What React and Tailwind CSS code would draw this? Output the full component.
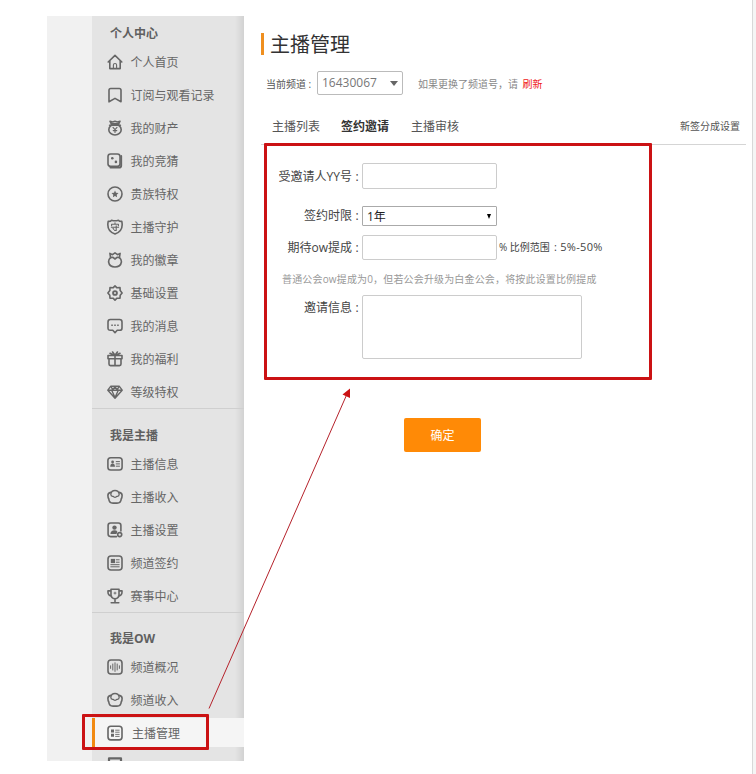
import React from "react";

const ICONS = {
  home: (
    <>
      <path d="M1.2 8 8 1.4 14.8 8M2.8 6.6v8h10.4v-8" />
      <path d="M6.4 14.3v-3.2a1.6 1.6 0 0 1 3.2 0v3.2" strokeWidth="1.1" />
    </>
  ),
  bookmark: <path d="M2 14.8V3.2Q2 1.5 3.7 1.5h8.6Q14 1.5 14 3.2v11.6L8 11.4z" />,
  money: (
    <>
      <path d="M3 1.2 4.300 3.800h7.400L13 1.200l-2.600.8L8 1.300l-2.400.7zM2.600 5.200h10.800" />
      <ellipse cx="8" cy="9.7" rx="6.2" ry="5.3" />
      <path d="m6 7.400 2 2.300 2-2.300M8 9.700v2.800M6.200 10.600h3.600" strokeWidth="1.1" />
    </>
  ),
  dice: (
    <>
      <rect x="1" y="1" width="12" height="12.4" rx="2.6" />
      <path d="M14.200 3v9.400q0 2.200-2.200 2.200H3.400" strokeWidth="1.9" />
      <circle cx="5.3" cy="5.2" r="1.3" fill="currentColor" stroke="none" />
      <circle cx="8.9" cy="8.9" r="1.3" fill="currentColor" stroke="none" />
    </>
  ),
  star: (
    <>
      <circle cx="8" cy="8" r="7" />
      <path d="m8 4.600 1 2.200 2.500.3-1.800 1.700.4 2.500L8 10.100l-2.100 1.200.4-2.500-1.800-1.700 2.500-.3z" fill="currentColor" stroke="none" />
    </>
  ),
  guard: (
    <>
      <path d="M1.200 2.400Q3.500 2.600 4.600 1.200 8 2.400 11.400 1.200q1.100 1.400 3.400 1.200Q16.800 12 8 15-.8 12 1.200 2.400z" />
      <path d="M8 3.800v1.400M4.600 6.800V5.300h6.800v1.500M4.400 8.300h7.200M9.200 6.900v4.600H7.600M6 9.300l.9 1" strokeWidth="1.1" />
    </>
  ),
  badge: (
    <>
      <path d="M3.600 5.600 2.900 1.400l2.600 1.300L8 .9l2.500 1.800 2.600-1.300-.7 4.200Q14.600 7.400 14.400 10q-.8 5-6.400 5T1.600 10q-.2-2.600 2-4.400z" />
      <path d="m3.600 5.600 2.100-.4L8 7l2.300-1.800 2.100.4" />
    </>
  ),
  gear: (
    <>
      <path d="M8 .9 10 2.800l3-.2.2 3L15.100 8l-1.900 2.300-.2 3-3-.1L8 15.100l-2-1.900-3 .1-.2-3L.9 8l1.900-2.400.2-3 3 .2z" />
      <circle cx="8" cy="8" r="1.9" strokeWidth="1.9" />
    </>
  ),
  message: (
    <>
      <path d="M3.400 1.500h9.200q2.400 0 2.400 2.400v6q0 2.400-2.400 2.400H10.200L8 14.700l-2.200-2.400H3.400Q1 12.300 1 9.900v-6q0-2.400 2.400-2.400z" />
      <path d="M4.300 6.400h1.500v1.500H4.300zM7.250 6.400h1.500v1.500h-1.500zM10.200 6.400h1.500v1.500h-1.500z" fill="currentColor" stroke="none" />
    </>
  ),
  gift: (
    <path d="M1 4.500h14v3.200H1zM2 7.700v5.400q0 1.500 1.500 1.500h9q1.500 0 1.500-1.500V7.700M8 4.500v10M8 4.300 5.600 1M8 4.300 10.400 1M6.600 3.900 3 2.300M9.400 3.900 13 2.300" />
  ),
  diamond: (
    <path d="M3.800 2.200h8.400L15.200 6.200 8 14.300.8 6.200zM1 6.200h14M4.800 6.400 8 13.600l3.200-7.200M4.200 2.800l1.400 3L8 3l2.400 2.800 1.400-3" strokeWidth="1.35" />
  ),
  idcard: (
    <>
      <rect x=".9" y="1.8" width="14.2" height="12.2" rx="2.8" />
      <circle cx="5.6" cy="6" r="1.4" fill="currentColor" stroke="none" />
      <path d="M3.200 10.800q.2-3.200 2.400-3.200t2.400 3.200z" fill="currentColor" stroke="none" />
      <path d="M9.200 5.600h3.300M9.200 7.900h3.300M9.200 10.200h3.300" strokeWidth="1" />
    </>
  ),
  income: (
    <>
      <path d="M3.800 3.400Q1 3.900.9 6.400q0 2 .9 3.600.3 4.100 4.200 4.100h4q3.900 0 4.200-4.100.9-1.600.9-3.600-.1-2.500-2.900-3" />
      <path d="M3.800 5.300Q4.300 1.500 8 1.500t4.200 3.800q-.1 2-1.700 2H9.800Q9.300 8.300 8 8.300T6.200 7.300H5.500q-1.600 0-1.700-2z" strokeWidth="1.3" />
    </>
  ),
  anchorset: (
    <>
      <path d="M9.600 14.600H3.600q-2.500 0-2.500-2.500V3.500Q1.100 1 3.600 1h7.800q2.500 0 2.500 2.500V9" />
      <circle cx="7.5" cy="5.6" r="2.2" fill="currentColor" stroke="none" />
      <path d="M3.400 12q.3-3.700 4.100-3.700 2.100 0 2.900 1.400L9.500 12z" fill="currentColor" stroke="none" />
      <circle cx="12.7" cy="12.6" r="2" />
    </>
  ),
  contract: (
    <>
      <rect x="1" y="1" width="14" height="14" rx="3" />
      <path d="M3.800 3.900h4.200v4.200H3.800z" fill="currentColor" stroke="none" />
      <path d="M9.200 4.800h3M9.200 7.200h3M3.800 9.700h8.400M3.800 11.800h8.400" strokeWidth="1" />
    </>
  ),
  trophy: (
    <>
      <path d="M4 1.300h8v5.500Q12 10.300 8 10.900 4 10.300 4 6.800zM4 2.900H1q-.4 4.300 3.500 5.300M12 2.900h3q.4 4.300-3.500 5.300M8 10.900v3.500M4.200 14.700h7.600" />
      <path d="M8 4.100v2M7 5.100h2" strokeWidth=".9" />
    </>
  ),
  wave: (
    <>
      <rect x="1" y="1" width="14" height="14" rx="3" />
      <path d="M3.600 6.800v2.600M5.800 5v6M8 3.800v8.600M10.200 5v6M12.400 6.800v2.600" strokeWidth="1" />
    </>
  ),
  manage: (
    <>
      <rect x="1" y="1.3" width="14" height="13.6" rx="2.8" />
      <path d="M4 4.600h3v3H4zM4 8.800h3v3H4z" fill="currentColor" stroke="none" />
      <path d="M8.600 5.200h3.600M8.600 7.200h3.600M8.600 9.400h3.600M8.600 11.400h3.600" strokeWidth=".9" />
    </>
  ),
  box: <path d="M2 2.400h12v10H2z" strokeWidth="2.2" />,
};

function Icon({ name }) {
  return (
    <svg
      viewBox="0 0 16 16"
      className="size-4 shrink-0"
      fill="none"
      stroke="currentColor"
      strokeWidth="1.6"
      strokeLinejoin="round"
      strokeLinecap="round"
    >
      {ICONS[name]}
    </svg>
  );
}

function Item({ icon, label }) {
  return (
    <li className="flex h-[33px] items-center gap-2 pl-[14.5px] text-[#666]">
      <Icon name={icon} />
      <span className="pt-[2px] text-[12px] leading-4">{label}</span>
    </li>
  );
}

function Heading({ children, className }) {
  return <h2 className={`pl-[18px] text-[12px] leading-4 font-bold text-[#606060] ${className}`}>{children}</h2>;
}

const PERSONAL = [
  ["home", "个人首页"],
  ["bookmark", "订阅与观看记录"],
  ["money", "我的财产"],
  ["dice", "我的竞猜"],
  ["star", "贵族特权"],
  ["guard", "主播守护"],
  ["badge", "我的徽章"],
  ["gear", "基础设置"],
  ["message", "我的消息"],
  ["gift", "我的福利"],
  ["diamond", "等级特权"],
];

const ANCHOR = [
  ["idcard", "主播信息"],
  ["income", "主播收入"],
  ["anchorset", "主播设置"],
  ["contract", "频道签约"],
  ["trophy", "赛事中心"],
];

function Sidebar() {
  return (
    <aside className="relative mt-4 ml-[47px] flex h-[745px] w-[197px] shrink-0 bg-[#f1f1f1] pl-[45px]">
      <nav className="h-[745px] w-[152px] overflow-hidden bg-[linear-gradient(to_right,#e4e4e4_0,#e4e4e4_143px,#d2d2d2_152px)]">
        <Heading className="h-[29px] pt-[10px]">个人中心</Heading>
        <ul>{PERSONAL.map(([i, l]) => <Item key={l} icon={i} label={l} />)}</ul>
        <div className="h-px bg-[#cfcfcf]" />
        <Heading className="h-[38px] pt-[19px]">我是主播</Heading>
        <ul>{ANCHOR.map(([i, l]) => <Item key={l} icon={i} label={l} />)}</ul>
        <div className="h-px bg-[#cfcfcf]" />
        <Heading className="h-[37px] pt-[18px]">我是OW</Heading>
        <ul>
          <Item icon="wave" label="频道概况" />
          <Item icon="income" label="频道收入" />
          <li className="flex h-[33px] items-center">
            <div className="flex h-[29px] w-full items-center gap-[9px] border-l-[3px] border-[#f28a12] bg-[#f5f5f5] pl-[12px] text-[#666]">
              <Icon name="manage" />
              <span className="pt-[2px] text-[12px] leading-4">主播管理</span>
            </div>
          </li>
          <li className="pt-[7px] pl-[14.5px] text-[#666]">
            <Icon name="box" />
          </li>
        </ul>
      </nav>
      <div className="absolute top-[698px] left-[35px] h-[36px] w-[127px] rounded-[1px] border-[3px] border-[#cb1214]" />
    </aside>
  );
}

function Label({ children, className = "pt-[2px]" }) {
  return (
    <div className={`flex w-[101px] shrink-0 justify-end text-[12px] leading-4 whitespace-nowrap text-[#444] ${className}`}>
      {children}
      <span className="w-[10px] text-center">:</span>
    </div>
  );
}

function Main() {
  return (
    <main className="ml-[17px] w-[485px] shrink-0 whitespace-nowrap">
      <h1 className="mt-[33px] flex h-[22px] items-center border-l-[3px] border-[#ef8f1f] pt-[2px] pl-[6px] text-[20px] text-[#333]">
        主播管理
      </h1>
      <div className="mt-[16px] flex h-[24px] items-center pl-[5px] text-[10px] text-[#555]">
        <span className="w-[51px] pt-[2px]">当前频道 :</span>
        <div className="flex h-[24px] w-[86px] items-center justify-between rounded-[2px] border border-[#bbb] pr-[4px] pl-[4px] text-[12px] text-[#777]">
          <span>16430067</span>
          <span className="border-x-[4.5px] border-t-[5px] border-x-transparent border-t-[#666]" />
        </div>
        <span className="ml-[15px] pt-[2px] text-[#888]">
          如果更换了频道号，请 <span className="ml-[2px] text-[#f01818]">刷新</span>
        </span>
      </div>
      <div className="mt-[13px] flex h-[37px] items-center border-b border-[#d5d5d5] pl-[11px] text-[12px] text-[#555]">
        <span className="w-[58px] pt-[2px]">主播列表</span>
        <span className="flex h-[37px] w-[69px] items-center justify-center border-b-2 border-[#e8502e] pt-[4px] pl-px font-bold text-[#333]">
          签约邀请
        </span>
        <span className="ml-[12px] pt-[2px]">主播审核</span>
        <span className="ml-auto pr-[6px] text-[10px]">新签分成设置</span>
      </div>
      <section className="relative pt-[18px]">
        <div className="absolute -top-[2px] left-[3px] h-[237px] w-[388px] rounded-[1px] border-[3px] border-[#cb1214]" />
        <div className="flex h-[26px] items-center">
          <Label>受邀请人YY号</Label>
          <div className="h-[26px] w-[135px] rounded-[2px] border border-[#ccc]" />
        </div>
        <div className="mt-[17px] flex h-[20px] items-center">
          <Label className="-mt-px">签约时限</Label>
          <div className="flex h-[20px] w-[135px] items-center justify-between rounded-[1px] border border-[#aaa] pr-[5px] pl-[4px] text-[12px] text-[#222]">
            <span className="pt-[2px]">1年</span>
            <span className="border-x-[2.5px] border-t-[5px] border-x-transparent border-t-black" />
          </div>
        </div>
        <div className="mt-[9px] flex h-[25px] items-center">
          <Label className="pt-px">期待ow提成</Label>
          <div className="h-[25px] w-[135px] rounded-[2px] border border-[#ccc]" />
          <span className="ml-[2px] flex items-center text-[10px] text-[#444]">
            % 比例范围<span className="ml-[4px] text-[11px] tracking-[0.3px]">: 5%-50%</span>
          </span>
        </div>
        <p className="mt-[11px] h-4 pl-[21px] text-[10px] leading-4 tracking-[0.16px] text-[#999]">
          普通公会ow提成为0，但若公会升级为白金公会，将按此设置比例提成
        </p>
        <div className="mt-[8px] flex">
          <Label className="pt-[5px]">邀请信息</Label>
          <div className="h-[64px] w-[220px] rounded-[2px] border border-[#ccc]" />
        </div>
        <button className="mt-[59px] ml-[143px] block h-[34px] w-[77px] rounded-[2px] bg-[#ff8a06] pt-[2px] text-[12px] text-white">
          确定
        </button>
      </section>
    </main>
  );
}

export default function App() {
  return (
    <div className="relative flex h-[774px] w-[756px] overflow-hidden bg-white font-['Open_Sans','Noto_Sans_CJK_SC',sans-serif]">
      <Sidebar />
      <Main />
      <div className="ml-auto w-[4px] border-l border-[#d8d8d8] bg-[#f5f5f5]" />
      <svg className="pointer-events-none absolute inset-0 h-[774px] w-[756px]" viewBox="0 0 756 774">
        <path d="M209 708.5 347 394" stroke="#b5222b" strokeWidth="1" fill="none" />
        <path d="M350 388.5 350 398 342.5 394.5z" fill="#cb1214" />
      </svg>
    </div>
  );
}
